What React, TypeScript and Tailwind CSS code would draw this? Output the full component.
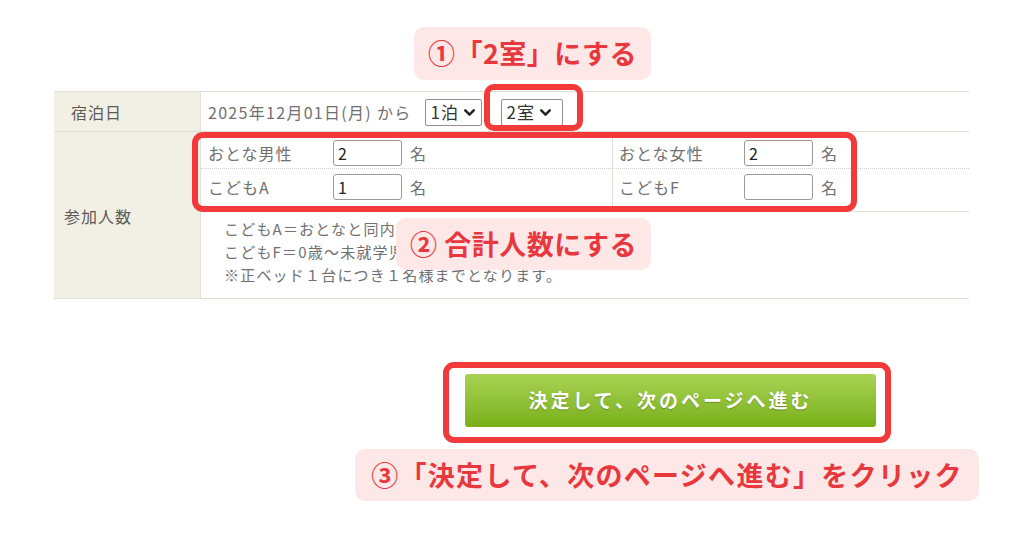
import React from 'react';
import { ChevronDown } from 'lucide-react';

const jp = "font-['Noto_Sans_CJK_JP','Noto_Sans',sans-serif]";

const Callout = ({ children, className = '' }: { children: React.ReactNode; className?: string }) => (
  <div
    className={`flex items-center justify-center rounded-[10px] bg-[#fde7e7] text-[27px] font-bold text-[#e8383d] ${className}`}
  >
    {children}
  </div>
);

const FakeSelect = ({ value, width }: { value: string; width: string }) => (
  <div className={`flex h-[27px] ${width} items-center gap-[2px] rounded-[2px] border border-[#8f8f8f] bg-white pl-[5px] text-[17px] text-[#333]`}>
    <span>{value}</span>
    <ChevronDown size={17} strokeWidth={3.5} className="text-[#222]" />
  </div>
);

const NumInput = ({ value }: { value: string }) => (
  <div className="flex h-[26px] w-[69px] items-center rounded-[3px] border border-[#9a9a9a] bg-white pl-[4px] text-[16px] text-[#222]">
    {value}
  </div>
);

const guests = [
  [
    { label: 'おとな男性', value: '2' },
    { label: 'おとな女性', value: '2' },
  ],
  [
    { label: 'こどもA', value: '1' },
    { label: 'こどもF', value: '' },
  ],
];

export default function App() {
  return (
    <div className={`relative h-[538px] w-[1024px] overflow-hidden bg-white ${jp}`}>
      {/* step 1 label */}
      <div className="pl-[414px] pt-[27px]">
        <Callout className="h-[53px] w-[237px] tracking-[0.5px]">①「2室」にする</Callout>
      </div>

      {/* booking table */}
      <div className="ml-[54px] mt-[11px] w-[915px] border-y border-[#e2e0da] text-[16px] tracking-[1px] text-[#707070]">
        <div className="flex h-[40px] border-b border-[#e2e0da]">
          <div className="flex w-[147px] items-center border-r border-[#e2e0da] bg-[#f2f0e4] pl-[17px] text-[#5a5a5a]">宿泊日</div>
          <div className="flex items-center pl-[7px] pt-[1px]">
            <span className="tracking-[1.3px]">2025年12月01日(月) から</span>
            <div className="ml-[13px]">
              <FakeSelect value="1泊" width="w-[57px]" />
            </div>
            <div className="ml-[19px]">
              <FakeSelect value="2室" width="w-[62px]" />
            </div>
          </div>
        </div>

        <div className="flex h-[166px]">
          <div className="flex w-[147px] items-center border-r border-[#e2e0da] bg-[#f2f0e4] pl-[10px] pt-[2px] text-[#5a5a5a]">参加人数</div>
          <div className="flex flex-1 flex-col">
            {guests.map((row, i) => (
              <div
                key={i}
                className={`grid grid-cols-[411px_1fr] ${i === 0 ? 'h-[37px] border-b border-dotted border-[#cfcfcf]' : 'h-[43px] border-b border-[#e2e0da]'}`}
              >
                {row.map((g, j) => (
                  <div key={j} className={`flex items-center ${j === 1 ? 'border-l border-[#e2e0da] pl-[6px]' : 'pl-[7px]'} ${i === 0 ? 'pt-[6px]' : 'pb-[6px]'}`}>
                    <span className="w-[125px]">{g.label}</span>
                    <NumInput value={g.value} />
                    <span className="ml-[8px]">名</span>
                  </div>
                ))}
              </div>
            ))}
            <div className="pl-[23px] pt-[5px] text-[15px] leading-[23px] tracking-[1.2px]">
              <p>こどもA＝おとなと同内容の食事・寝具付き（小学生）</p>
              <p>こどもF＝0歳〜未就学児（食事・寝具なし）</p>
              <p>※正ベッド１台につき１名様までとなります。</p>
            </div>
          </div>
        </div>
      </div>

      {/* submit */}
      <div className="ml-[465px] mt-[75px]">
        <button className="flex h-[53px] w-[411px] items-center justify-center rounded-[3px] bg-gradient-to-b from-[#a9d252] to-[#78b014] text-[19px] font-bold tracking-[3px] text-white [text-shadow:0_1px_1px_rgba(0,0,0,0.25)]">
          決定して、次のページへ進む
        </button>
      </div>
      <div className="ml-[355px] mt-[22px]">
        <Callout className="h-[52px] w-[624px] tracking-[1.3px]">③「決定して、次のページへ進む」をクリック</Callout>
      </div>

      {/* annotations over the form */}
      <div className="absolute left-[484px] top-[84px] h-[47px] w-[99px] rounded-[10px] border-[6px] border-[#f23a3a]" />
      <div className="absolute left-[192px] top-[132px] h-[80px] w-[665px] rounded-[11px] border-[6px] border-[#f23a3a]" />
      <Callout className="absolute left-[396px] top-[218px] h-[52px] w-[255px] tracking-[0.5px]">② 合計人数にする</Callout>
      <div className="absolute left-[443px] top-[362px] h-[81px] w-[448px] rounded-[11px] border-[6px] border-[#f23a3a]" />
    </div>
  );
}
